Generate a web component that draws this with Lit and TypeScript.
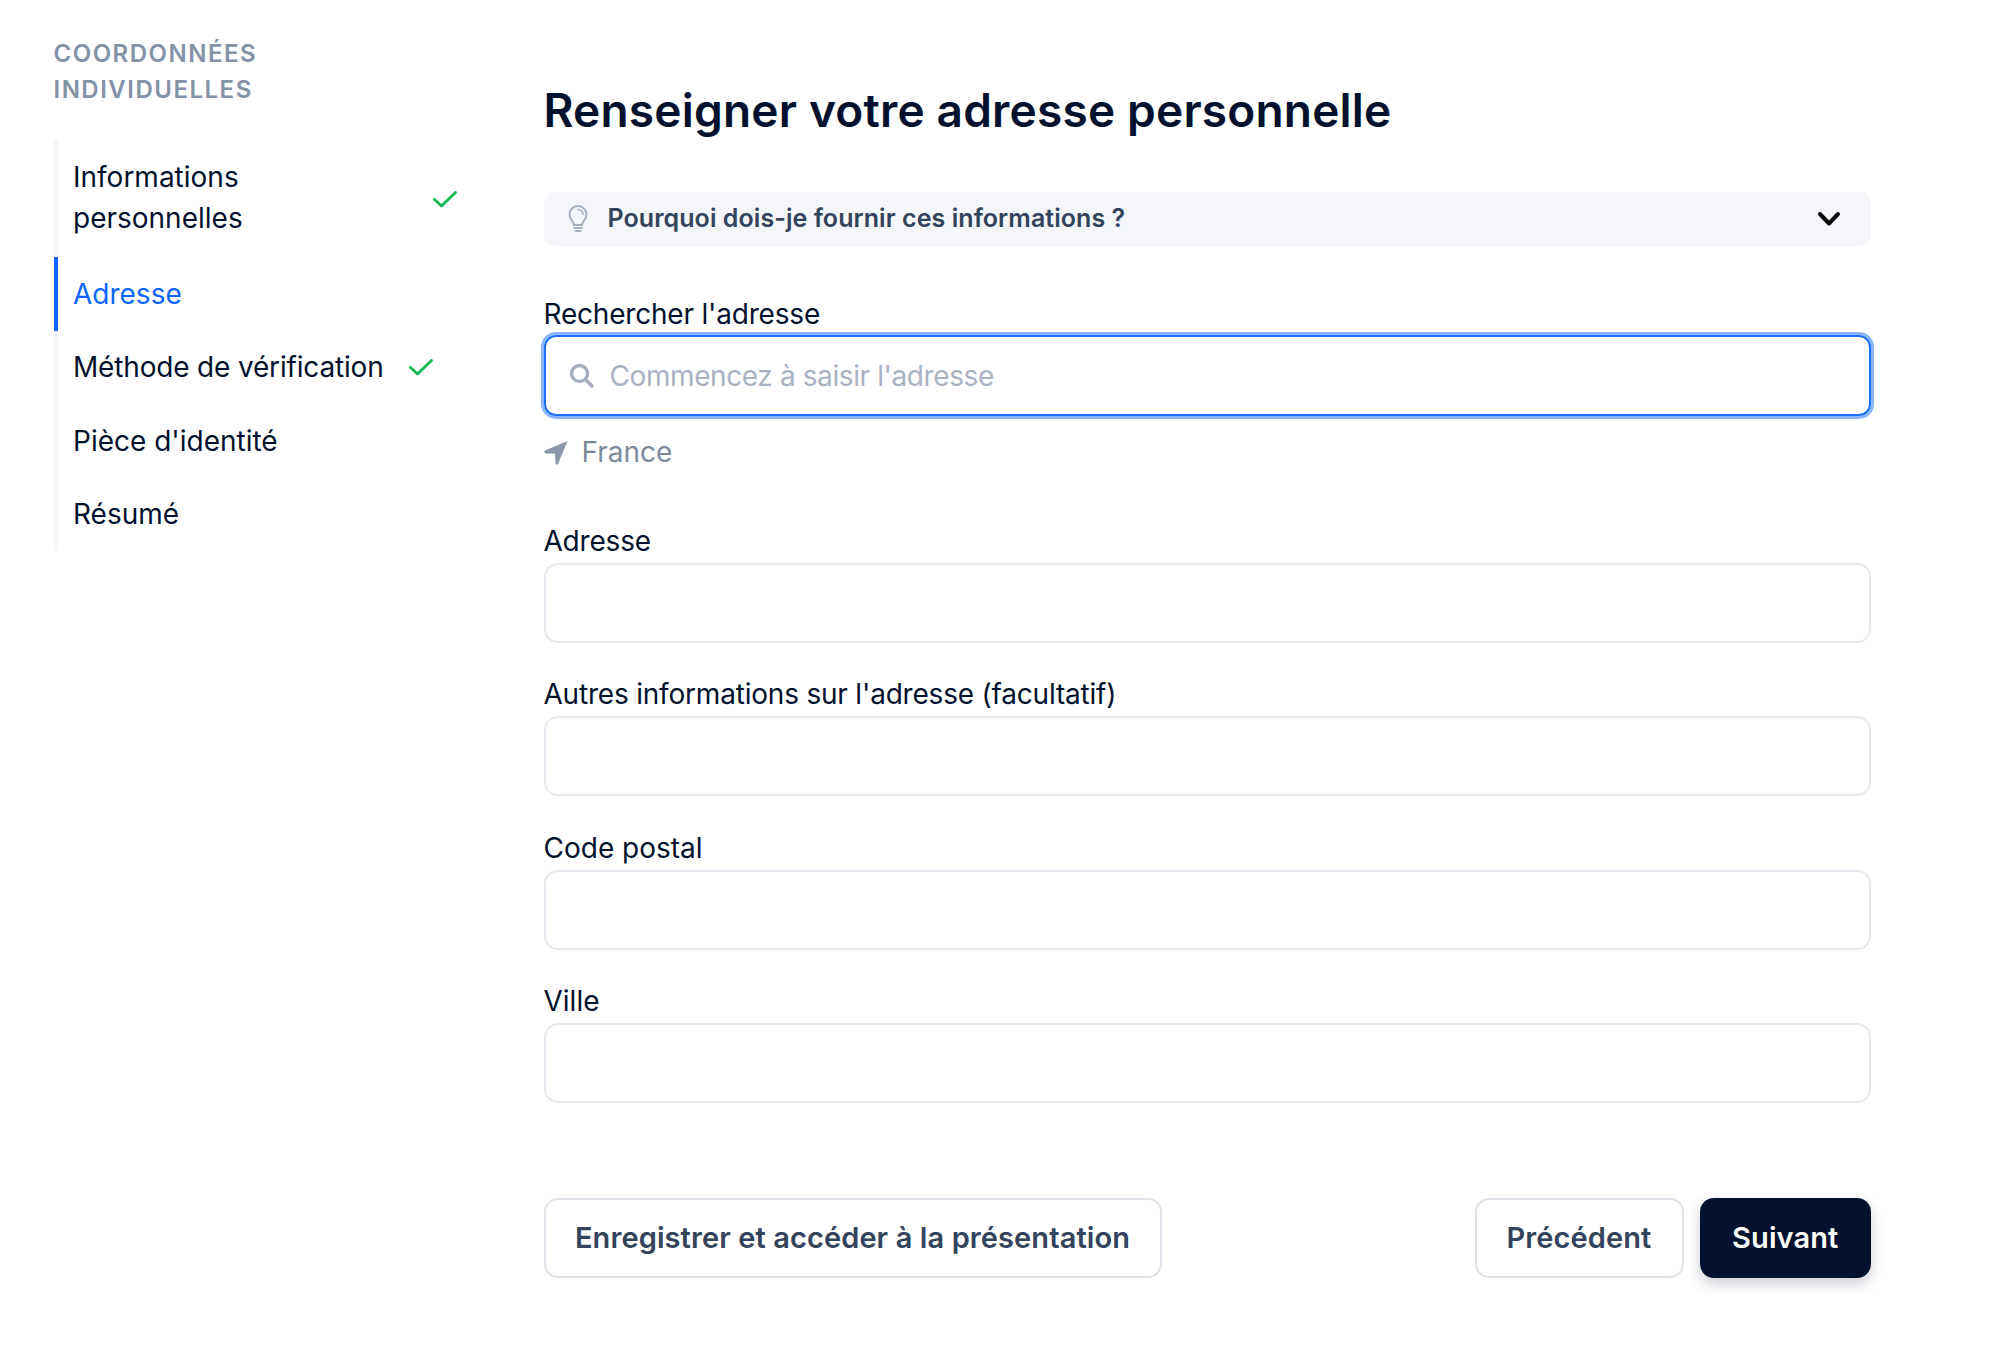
import { LitElement, html, css } from "lit";
import { customElement } from "lit/decorators.js";

const check = html`<svg class="check" width="24" height="17" viewBox="0 0 24 17" fill="none"><path d="M1.5 8.5 L8.5 15 L22.5 1.5" stroke="#12b84f" stroke-width="2.8" stroke-linecap="round" stroke-linejoin="round"/></svg>`;

@customElement("app-root")
export class AppRoot extends LitElement {
  static styles = css`
    :host { display: flex; width: 2000px; height: 1372px; background: #fff; font-family: Inter, "Liberation Sans", sans-serif; color: #02122e; box-sizing: border-box; }
    * { box-sizing: border-box; }
    .side { width: 543.5px; padding: 36px 0 0 53.5px; flex: none; }
    .side-title { margin: 0; font-size: 24px; line-height: 36px; font-weight: 600; color: #8492a6; width: 300px; letter-spacing: 1.5px; }
    .nav { margin-top: 33px; width: 403px; border-left: 4px solid #f4f6f9; }
    .item { display: flex; align-items: center; gap: 25px; margin-left: -4px; padding: 16.2px 0 16.2px 19.5px; font-size: 28px; line-height: 41px; }
    .item.tight { letter-spacing: -0.17px; }
    .item.first { padding: 15.5px 0 18.5px 19.5px; }
    .item.active { color: #0d66ff; border-left: 4px solid #0d66ff; padding: 16.5px 0 16.5px 15.5px; }
    .check { flex: none; }
    .first .check { margin-top: 3px; }
    .main { width: 1327.5px; padding-top: 80px; flex: none; }
    h1 { margin: 0 0 52px; font-size: 46px; line-height: 60px; font-weight: 600; letter-spacing: 0.2px; color: #02122e; }
    .why { display: flex; align-items: center; height: 54px; background: #f4f6f9; border-radius: 10px; padding: 0 30px 2px 24px; font-size: 25px; font-weight: 600; letter-spacing: 0.06px; color: #33435c; margin-bottom: 50px; }
    .why span { flex: 1; margin-left: 20px; }
    .why svg { margin-top: 2px; }
    label { display: block; font-size: 28px; line-height: 36px; color: #02122e; margin-bottom: 4px; letter-spacing: -0.2px; }
    label.loose { letter-spacing: 0; }
    label.search-label { margin-bottom: 3px; }
    .search { display: flex; align-items: center; height: 81px; border: 2px solid #1a70ff; border-radius: 12px; box-shadow: 0 0 0 3px #8ab4ff; padding: 0 0 0 23px; gap: 16px; }
    .search input { flex: 1; border: none; outline: none; padding: 0; font: inherit; font-size: 28px; letter-spacing: -0.4px; background: transparent; }
    .search input::placeholder { color: #a9b2c1; opacity: 1; }
    .country { display: flex; align-items: center; gap: 14px; height: 36px; margin: 18px 0 53px; font-size: 28px; color: #7d8a9c; }
    .field { margin-bottom: 33.3px; }
    .field input { display: block; width: 100%; height: 80px; border: 2px solid #e6e9ef; border-radius: 14px; background: #fff; outline: none; padding: 0 20px; font: inherit; }
    .actions { display: flex; margin-top: 95px; gap: 16px; }
    button { height: 80px; border-radius: 14px; font: inherit; font-size: 29px; font-weight: 600; letter-spacing: 0.1px; border: 2px solid #e0e4ea; background: #fff; color: #33435c; padding: 0; }
    .save { width: 618px; margin-right: auto; }
    .prev { width: 209px; }
    .next { width: 171.5px; background: #02122e; border-color: #02122e; color: #fff; box-shadow: 0 6px 14px rgba(2, 18, 46, 0.2); }
  `;

  render() {
    return html`
      <aside class="side">
        <h2 class="side-title">COORDONNÉES INDIVIDUELLES</h2>
        <nav class="nav">
          <div class="item first"><span>Informations personnelles</span>${check}</div>
          <div class="item active"><span>Adresse</span></div>
          <div class="item tight"><span>Méthode de vérification</span>${check}</div>
          <div class="item"><span>Pièce d'identité</span></div>
          <div class="item"><span>Résumé</span></div>
        </nav>
      </aside>
      <main class="main">
        <h1>Renseigner votre adresse personnelle</h1>
        <div class="why">
          <svg width="20" height="28" viewBox="0 0 20 28" fill="none" stroke="#a7b1bf" stroke-width="2" stroke-linecap="round">
            <path d="M6 20 C6 16.5 1.5 14.5 1.5 9.5 A8.5 8.5 0 0 1 18.5 9.5 C18.5 14.5 14 16.5 14 20 Z"/>
            <path d="M6 23 H14 M7.5 26 H12.5"/>
            <path d="M10 4.5 A5 5 0 0 1 15 9.5" stroke-width="1.5"/>
          </svg>
          <span>Pourquoi dois-je fournir ces informations ?</span>
          <svg width="24" height="16" viewBox="0 0 24 16" fill="none"><path d="M3 3 L12 12.5 L21 3" stroke="#0a0a0a" stroke-width="4" stroke-linecap="round" stroke-linejoin="round"/></svg>
        </div>
        <label class="search-label">Rechercher l'adresse</label>
        <div class="search">
          <svg width="25" height="25" viewBox="0 0 25 25" fill="none" stroke="#a4aebc" stroke-width="3.4" stroke-linecap="round"><circle cx="10.5" cy="10.5" r="8"/><path d="M16.5 16.5 L23 23"/></svg>
          <input placeholder="Commencez à saisir l'adresse" />
        </div>
        <div class="country">
          <svg width="24" height="25" viewBox="0 0 24 25"><path d="M23.5 1 L14 24 Q12 25.5 11.5 23.5 L11 13.5 L1.5 13.5 Q-0.5 12 1 10.5 Z" fill="#8c98a8"/></svg>
          <span>France</span>
        </div>
        <div class="field"><label>Adresse</label><input /></div>
        <div class="field"><label>Autres informations sur l'adresse (facultatif)</label><input /></div>
        <div class="field"><label class="loose">Code postal</label><input /></div>
        <div class="field"><label class="loose">Ville</label><input /></div>
        <div class="actions">
          <button class="save">Enregistrer et accéder à la présentation</button>
          <button class="prev">Précédent</button>
          <button class="next">Suivant</button>
        </div>
      </main>
    `;
  }
}
